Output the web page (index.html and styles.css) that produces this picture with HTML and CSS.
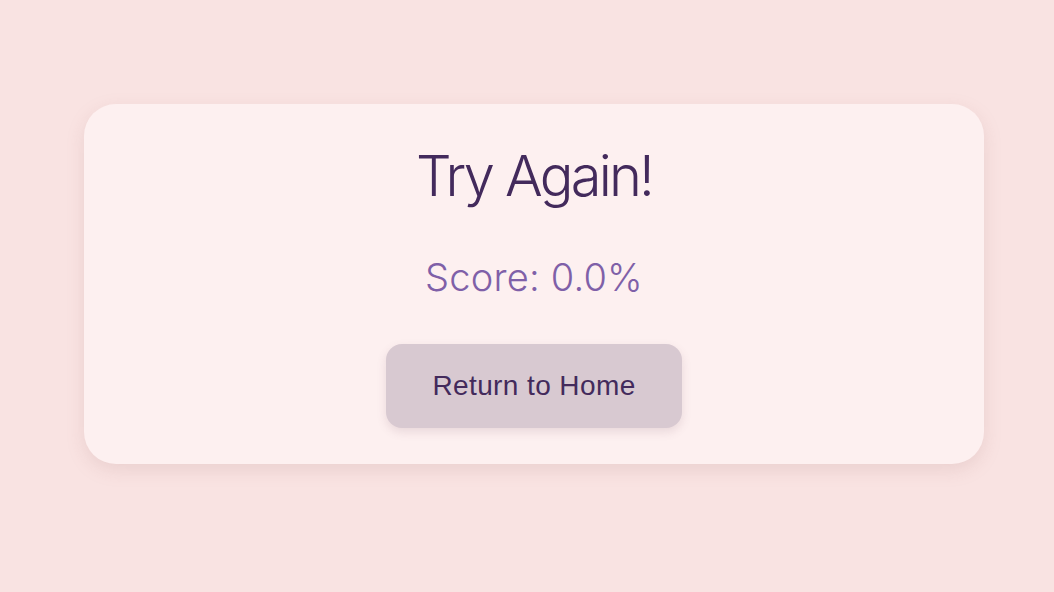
FILE: index.html
```html
<!DOCTYPE html>
<html>
<head>
<meta charset="utf-8">
<link rel="stylesheet" href="styles.css">
</head>
<body>
<main class="page">
  <section class="card">
    <h1 class="title">Try Again!</h1>
    <p class="score">Score: 0.0%</p>
    <button class="home-btn">Return to Home</button>
  </section>
</main>
</body>
</html>
```
FILE: styles.css
```css
html, body {
  margin: 0;
  padding: 0;
  height: 100%;
}
body {
  background: #f9e3e2;
  font-family: Inter, "Noto Sans", sans-serif;
}
.page {
  display: flex;
  justify-content: center;
  padding-top: 104px;
  padding-left: 14px;
}
.card {
  width: 900px;
  height: 360px;
  box-sizing: border-box;
  background: #fdf0f0;
  border-radius: 32px;
  box-shadow: 0 6px 18px rgba(170, 120, 120, 0.18);
  display: flex;
  flex-direction: column;
  align-items: center;
  padding-top: 36px;
}
.title {
  margin: 0;
  font-size: 56px;
  font-weight: 300;
  line-height: 72px;
  color: #432a5c;
  letter-spacing: -2.8px;
}
.score {
  margin: 40px 0 0;
  font-size: 38px;
  font-weight: 300;
  line-height: 50px;
  color: #7f60a8;
  letter-spacing: 0.2px;
}
.home-btn {
  margin-top: 42px;
  width: 296px;
  height: 84px;
  border: none;
  border-radius: 16px;
  background: #d8c9d1;
  box-shadow: 0 4px 10px rgba(120, 80, 100, 0.15);
  font-family: "Liberation Sans", Arial, sans-serif;
  font-size: 28px;
  letter-spacing: 0.4px;
  color: #432a5c;
  cursor: pointer;
}
```
